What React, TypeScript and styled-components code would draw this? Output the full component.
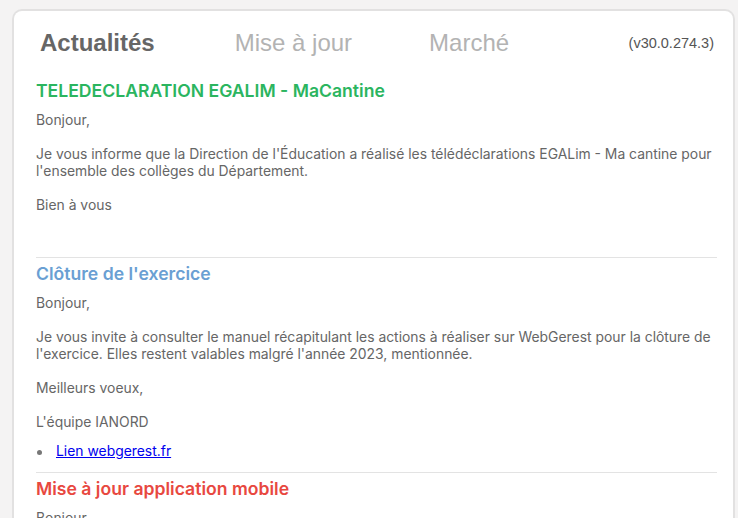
import styled, { createGlobalStyle } from "styled-components";

const GlobalStyle = createGlobalStyle`
  body {
    margin: 0;
    background: #f4f3f3;
    font-family: Inter, "Noto Sans", sans-serif;
  }
`;

const Page = styled.div`
  padding: 9px 3px 0 12px;
  height: 518px;
  box-sizing: border-box;
  overflow: hidden;
`;

const Card = styled.div`
  background: #fff;
  border: 2px solid #e2e1e1;
  border-bottom: none;
  border-radius: 10px 10px 0 0;
  padding: 18px 16px 0 22px;
  min-height: 600px;
`;

const TabBar = styled.div`
  display: flex;
  align-items: center;
  padding-left: 4px;
  font-family: "Liberation Sans", Arial, sans-serif;
`;

const Tab = styled.div<{ active?: boolean; gap?: number }>`
  font-size: 24px;
  line-height: 28px;
  margin-right: ${p => p.gap ?? 0}px;
  font-weight: ${p => (p.active ? 700 : 400)};
  color: ${p => (p.active ? "#666" : "#b3b3b3")};
`;

const Version = styled.div`
  margin-left: auto;
  margin-right: 3px;
  font-size: 14.5px;
  color: #555;
`;

const Article = styled.section`
  padding-bottom: 5px;
  & + & {
    border-top: 1px solid #e3e3e3;
    padding-top: 5px;
  }
  &:first-of-type {
    margin-top: 23px;
  }
`;

const Title = styled.h3<{ tone: string }>`
  margin: 0 0 10px;
  font-size: 17.6px;
  line-height: 22px;
  font-weight: 600;
  color: ${p => p.tone};
`;

const Text = styled.p`
  margin: 0 0 17px;
  font-size: 13.9px;
  line-height: 17px;
  color: #666;
`;

const Spacer = styled.div`
  height: 21px;
`;

const Links = styled.ul`
  margin: -5px 0 7px;
  padding: 0;
  list-style: none;
  font-size: 13.9px;
  line-height: 17px;
  color: #666;

  a {
    color: #0000ee;
  }
`;

const LinkItem = styled.li`
  display: flex;
  align-items: center;

  &::before {
    content: "";
    width: 5px;
    height: 5px;
    border-radius: 50%;
    background: #777;
    margin: 1px 14px 0 1px;
  }
`;

export default function App() {
  return (
    <Page>
      <GlobalStyle />
      <Card>
        <TabBar>
          <Tab active gap={80}>Actualités</Tab>
          <Tab gap={77}>Mise à jour</Tab>
          <Tab>Marché</Tab>
          <Version>(v30.0.274.3)</Version>
        </TabBar>

        <Article>
          <Title tone="#2bb55f">TELEDECLARATION EGALIM - MaCantine</Title>
          <Text>Bonjour,</Text>
          <Text>
            Je vous informe que la Direction de l'Éducation a réalisé les télédéclarations EGALim - Ma cantine pour
            l'ensemble des collèges du Département.
          </Text>
          <Text>Bien à vous</Text>
          <Spacer />
        </Article>

        <Article>
          <Title tone="#6a9fd3">Clôture de l'exercice</Title>
          <Text>Bonjour,</Text>
          <Text>
            Je vous invite à consulter le manuel récapitulant les actions à réaliser sur WebGerest pour la clôture de
            l'exercice. Elles restent valables malgré l'année 2023, mentionnée.
          </Text>
          <Text>Meilleurs voeux,</Text>
          <Text>L'équipe IANORD</Text>
          <Links>
            <LinkItem>
              <a href="#">Lien webgerest.fr</a>
            </LinkItem>
          </Links>
        </Article>

        <Article>
          <Title tone="#e8483f">Mise à jour application mobile</Title>
          <Text>Bonjour,</Text>
        </Article>
      </Card>
    </Page>
  );
}
